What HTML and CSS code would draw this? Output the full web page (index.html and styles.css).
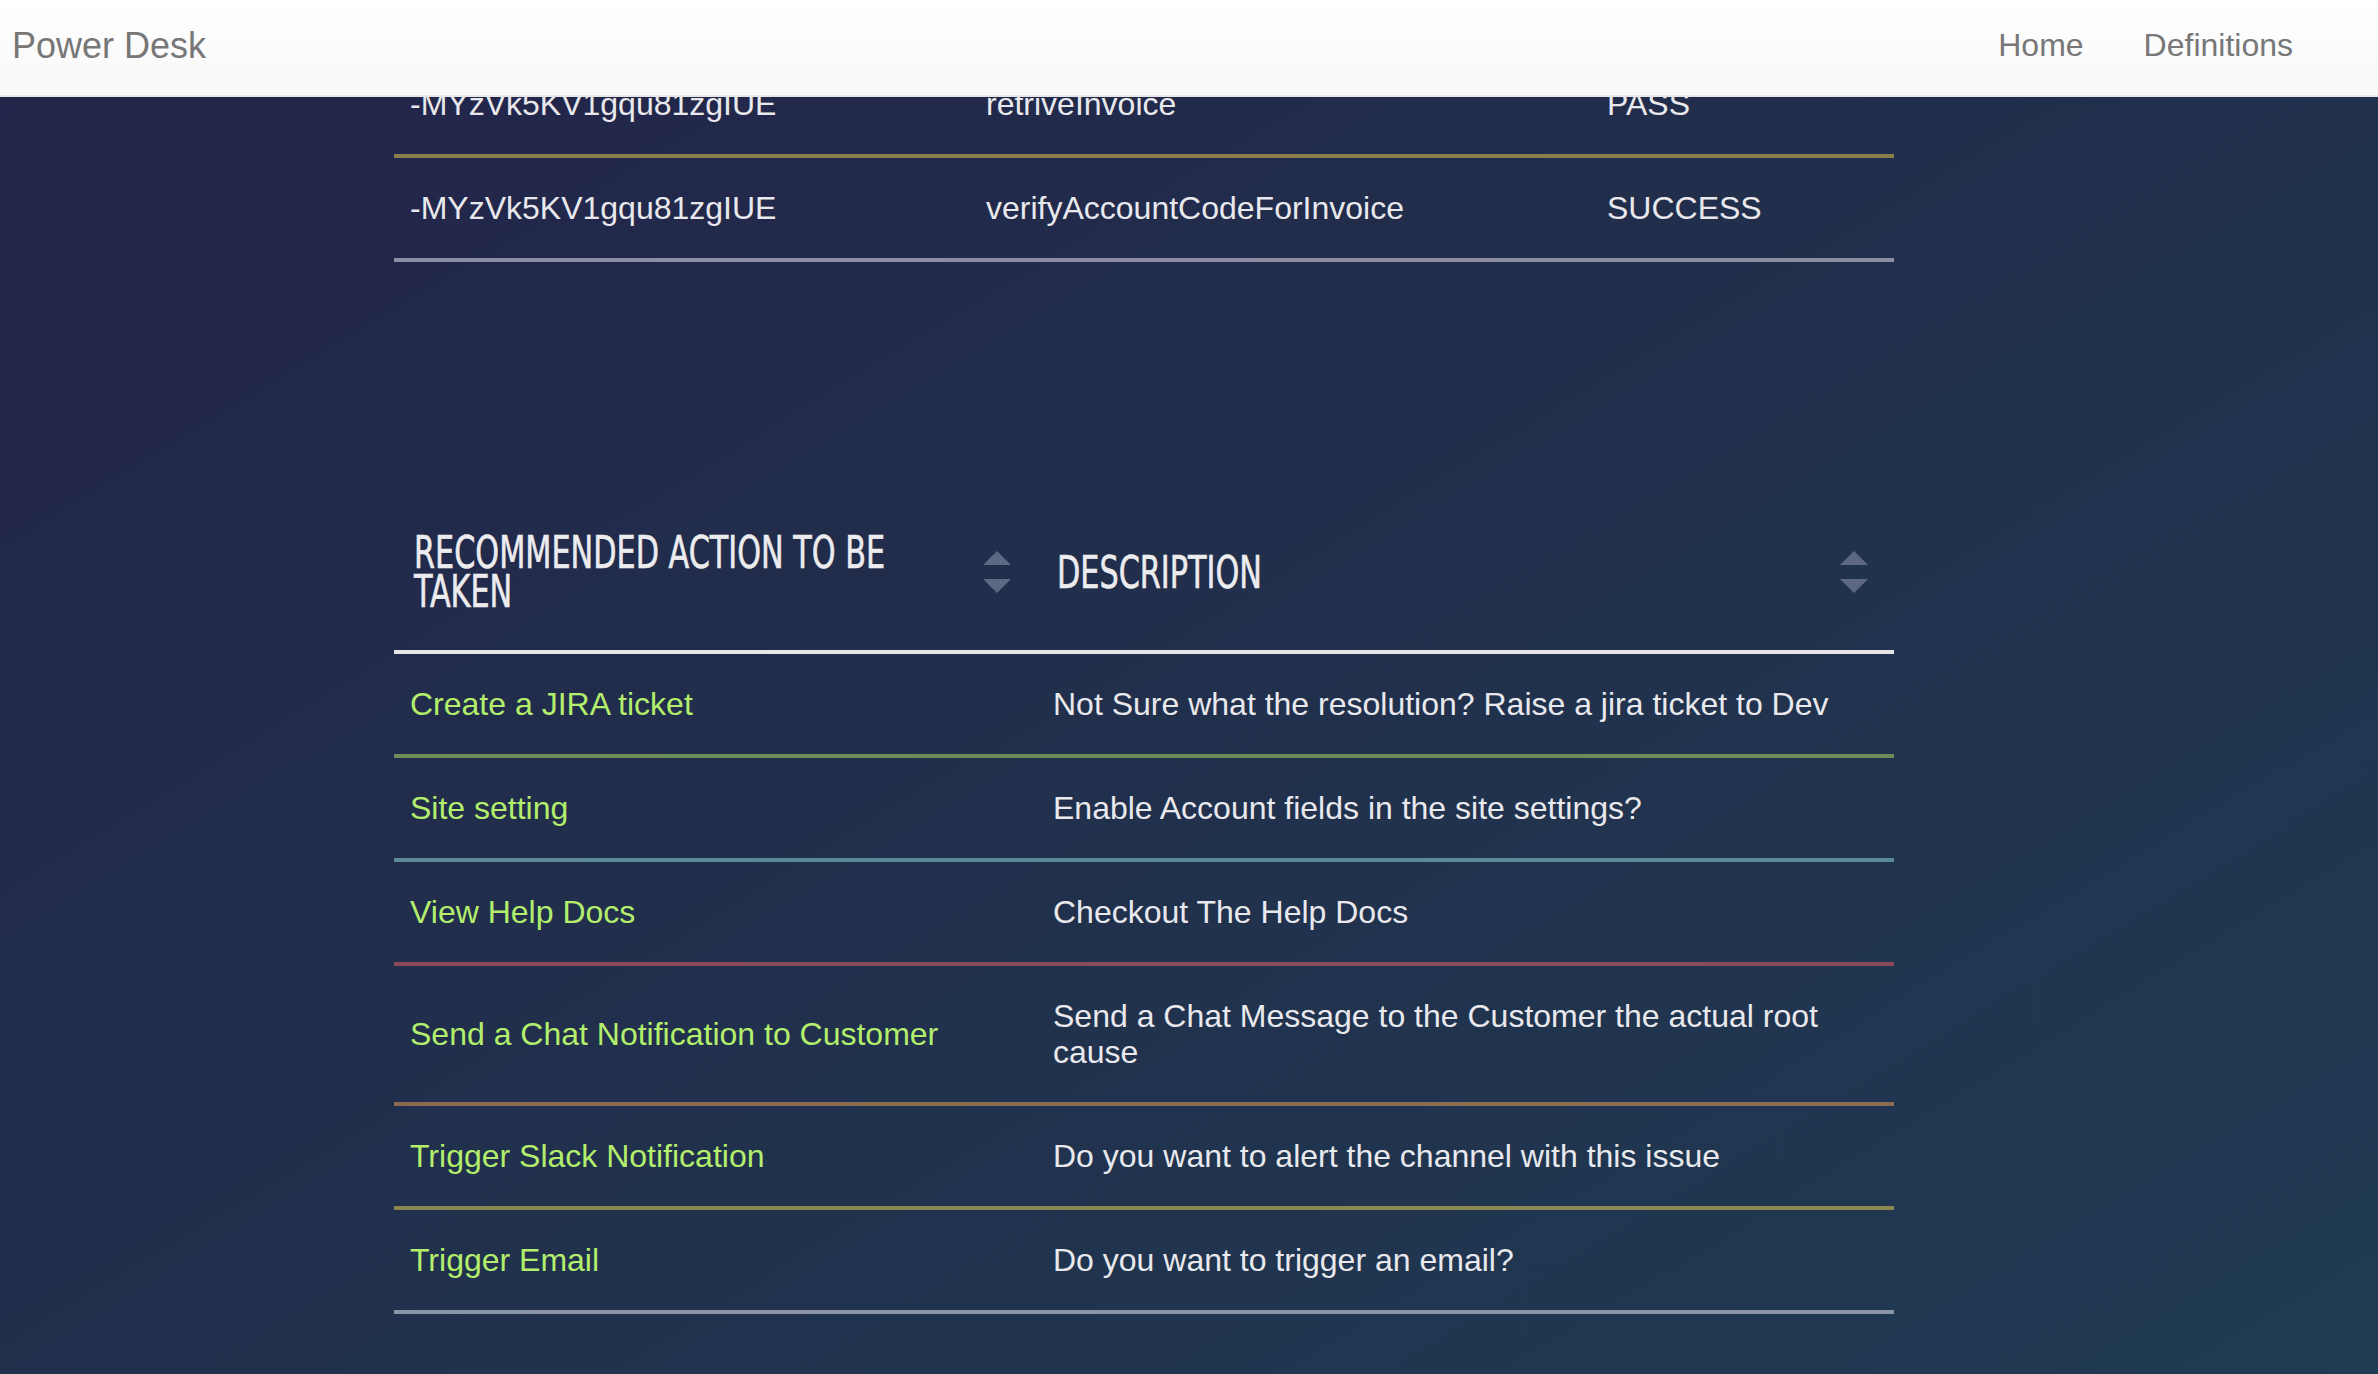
FILE: index.html
```html
<!DOCTYPE html>
<html lang="en">
<head>
<meta charset="utf-8">
<title>Power Desk</title>
<link rel="stylesheet" href="styles.css">
</head>
<body>
<nav class="navbar">
  <a class="brand" href="#">Power Desk</a>
  <ul class="nav-links">
    <li><a href="#">Home</a></li>
    <li><a href="#">Definitions</a></li>
  </ul>
</nav>

<main class="page">
  <table class="grid trace">
    <colgroup>
      <col class="c-id">
      <col class="c-step">
      <col class="c-status">
    </colgroup>
    <tbody>
      <tr class="ln-olive"><td>-MYzVk5KV1gqu81zgIUE</td><td>retriveInvoice</td><td>PASS</td></tr>
      <tr class="ln-gray"><td>-MYzVk5KV1gqu81zgIUE</td><td>verifyAccountCodeForInvoice</td><td>SUCCESS</td></tr>
    </tbody>
  </table>

  <table class="grid actions">
    <colgroup>
      <col class="c-action">
      <col class="c-desc">
    </colgroup>
    <thead>
      <tr>
        <th>
          <div class="th-inner">
            <span class="th-label"><span class="th-text">Recommended Action to be Taken</span></span>
            <svg class="sort" viewBox="0 0 28 42" width="28" height="42" aria-hidden="true"><polygon points="0,14 14,0 28,14"/><polygon points="0,28 28,28 14,42"/></svg>
          </div>
        </th>
        <th>
          <div class="th-inner">
            <span class="th-label"><span class="th-text">Description</span></span>
            <svg class="sort" viewBox="0 0 28 42" width="28" height="42" aria-hidden="true"><polygon points="0,14 14,0 28,14"/><polygon points="0,28 28,28 14,42"/></svg>
          </div>
        </th>
      </tr>
    </thead>
    <tbody>
      <tr class="ln-green"><td><a class="action" href="#">Create a JIRA ticket</a></td><td>Not Sure what the resolution? Raise a jira ticket to Dev</td></tr>
      <tr class="ln-teal"><td><a class="action" href="#">Site setting</a></td><td>Enable Account fields in the site settings?</td></tr>
      <tr class="ln-maroon"><td><a class="action" href="#">View Help Docs</a></td><td>Checkout The Help Docs</td></tr>
      <tr class="ln-brown"><td><a class="action" href="#">Send a Chat Notification to Customer</a></td><td>Send a Chat Message to the Customer the actual root cause</td></tr>
      <tr class="ln-olive"><td><a class="action" href="#">Trigger Slack Notification</a></td><td>Do you want to alert the channel with this issue</td></tr>
      <tr class="ln-gray2"><td><a class="action" href="#">Trigger Email</a></td><td>Do you want to trigger an email?</td></tr>
    </tbody>
  </table>
</main>
</body>
</html>
```

FILE: styles.css
```css
html, body {
  margin: 0;
  padding: 0;
}

body {
  min-height: 100vh;
  background: linear-gradient(to bottom right, #23234a 0%, #21304c 50%, #203b53 100%);
  font-family: "Liberation Sans", Arial, Helvetica, sans-serif;
  color: #e9e9ed;
}

/* ---------- navbar ---------- */
.navbar {
  position: fixed;
  top: 0;
  left: 0;
  right: 0;
  z-index: 10;
  box-sizing: border-box;
  height: 97px;
  padding: 0 85px 4px 12px;
  display: flex;
  align-items: center;
  justify-content: space-between;
  background: linear-gradient(to bottom, #ffffff 0%, #f8f8f8 100%);
  border-bottom: 2px solid #e7e7e7;
}

.brand {
  font-size: 36px;
  color: #777777;
  text-decoration: none;
}

.nav-links {
  display: flex;
  gap: 60px;
  list-style: none;
  margin: 0;
  padding: 0;
}

.nav-links a {
  font-size: 32px;
  color: #777777;
  text-decoration: none;
}

/* ---------- tables ---------- */
.page {
  padding: 54px 0 120px 394px;
}

.grid {
  width: 1500px;
  table-layout: fixed;
  border-collapse: separate;
  border-spacing: 0;
  font-size: 32px;
  line-height: 36px;
}

.grid td {
  padding: 32px 16px;
  vertical-align: middle;
  border-bottom: 4px solid #8b8da4;
}

.c-id { width: 576px; }
.c-step { width: 621px; }
.c-status { width: 303px; }

.c-action { width: 643px; }
.c-desc { width: 857px; }

.actions {
  margin-top: 232px;
}

.actions th {
  padding: 39px 26px 39px 20px;
  text-align: left;
  vertical-align: middle;
  border-bottom: 4px solid #e6e6e6;
  font-family: "DejaVu Sans Condensed", "DejaVu Sans", "Liberation Sans", sans-serif;
  font-stretch: condensed;
  font-weight: 400;
  font-size: 44px;
  line-height: 39px;
  letter-spacing: 0;
  text-transform: uppercase;
  color: #ececef;
}

.th-inner {
  display: flex;
  align-items: center;
  gap: 24px;
}

.th-label {
  flex: 1;
  min-width: 0;
}

/* the heading face is a tall, narrow display font: condense the fallback */
.th-text {
  display: inline-block;
  width: 128%;
  transform: scaleX(0.765);
  transform-origin: 0 50%;
  -webkit-text-stroke: 0.6px #ececef;
}

.sort {
  flex-shrink: 0;
  fill: #5d6884;
}

.action {
  color: #b3ee6c;
  text-decoration: none;
}

/* row divider colours */
.ln-olive td { border-bottom-color: #8a7f4c; }
.ln-gray td { border-bottom-color: #8b8da4; }
.ln-green td { border-bottom-color: #6c8c5a; }
.ln-teal td { border-bottom-color: #5a8a98; }
.ln-maroon td { border-bottom-color: #8a4b5c; }
.ln-brown td { border-bottom-color: #8b6c52; }
.ln-gray2 td { border-bottom-color: #8a95a7; }

.actions .ln-olive td { border-bottom-color: #8a8750; }
```
